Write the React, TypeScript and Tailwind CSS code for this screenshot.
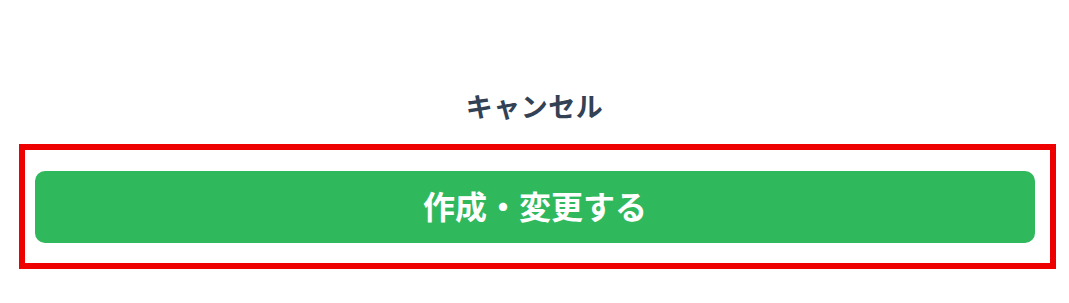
const App = () => {
    return (
        <div className="w-[1069px] h-[303px] bg-white pt-[88px] font-['Noto_Sans_CJK_JP','Noto_Sans',sans-serif]">
            <div className="h-[36px] flex items-center justify-center">
                <button className="text-[27px] leading-[36px] font-bold text-[#334155] tracking-[0.5px]">
                    キャンセル
                </button>
            </div>
            <div className="mt-[20px] ml-[19px] w-[1037px] h-[125px] border-[6px] border-[#ee0000] pl-[10px] pr-[15px] pt-[21px]">
                <button className="w-[1000px] h-[72px] rounded-[10px] bg-[#30b85d] text-white text-[32px] font-bold flex items-center justify-center pb-[4px]">
                    作成・変更する
                </button>
            </div>
        </div>
    );
};

export default App;
